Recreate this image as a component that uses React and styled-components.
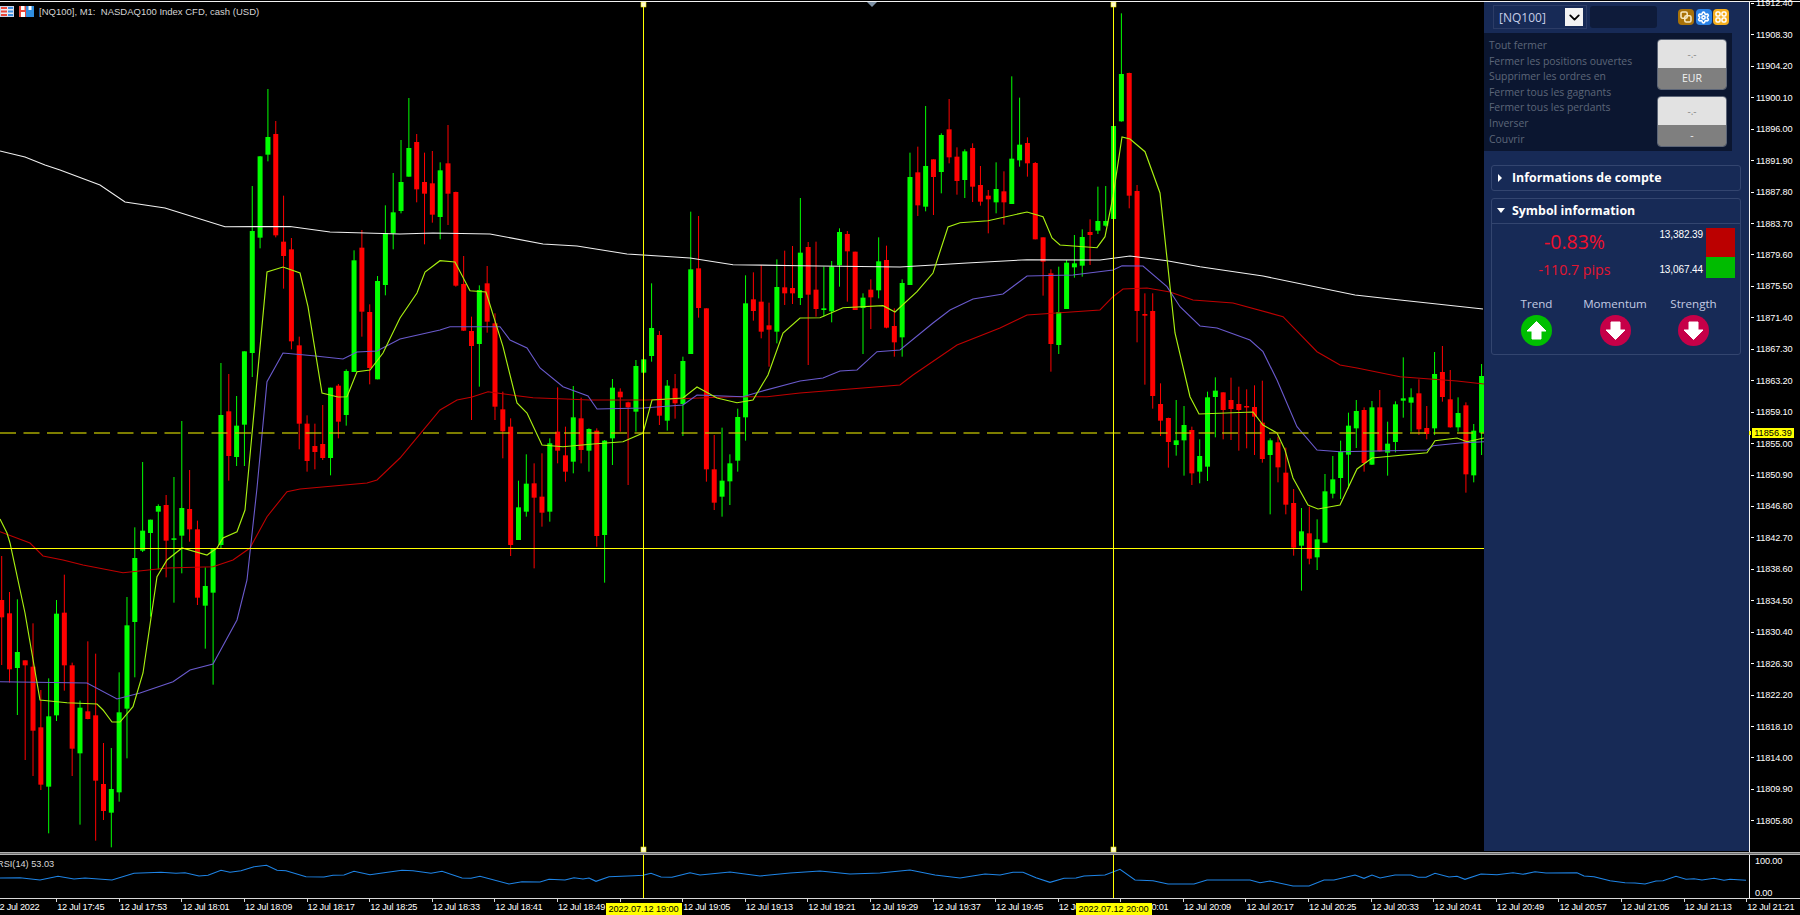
import React from "react";
import styled, { createGlobalStyle } from "styled-components";
import { ChevronDown, Settings } from "lucide-react";

const GlobalStyle = createGlobalStyle`
  html, body {
    margin: 0;
    padding: 0;
    background: #000;
    overflow: hidden;
  }
`;

// Candle rows read off the chart: wick top, body top, body bottom, wick bottom, colour.
// Each block is stored in thirds of a pixel from its base line.
const block = (base, rows) =>
  rows.map(([t, a, b, l, c]) => [base + t / 3, base + a / 3, base + b / 3, base + l / 3, c]);

const CANDLES = [
  ...block(480, [
    [228, 360, 412, 555, "r"], [336, 400, 568, 608, "r"], [358, 516, 564, 705, "g"],
    [541, 541, 556, 840, "r"], [430, 560, 752, 888, "r"], [630, 742, 914, 930, "r"],
    [595, 709, 920, 1060, "g"], [360, 401, 706, 723, "g"], [284, 398, 556, 632, "r"],
    [548, 556, 806, 888, "r"], [662, 683, 820, 1034, "g"], [484, 694, 717, 718, "r"],
    [521, 706, 902, 1082, "r"], [789, 912, 993, 1020, "r"], [804, 927, 998, 1102, "g"],
    [577, 697, 937, 965, "g"], [351, 436, 686, 835, "g"], [142, 234, 426, 592, "g"],
  ]),
  ...block(0, [
    [1386, 1592, 1652, 1656, "g"], [1559, 1559, 1599, 1850, "g"], [1513, 1518, 1535, 1708, "g"],
    [1485, 1515, 1622, 1732, "r"], [1431, 1615, 1617, 1808, "g"], [1263, 1524, 1607, 1720, "g"],
    [1410, 1527, 1588, 1625, "r"], [1562, 1588, 1793, 1815, "r"], [1702, 1758, 1817, 1946, "g"],
    [1645, 1647, 1778, 2054, "g"], [1089, 1245, 1635, 1647, "g"],
  ]),
  ...block(240, [
    [402, 514, 648, 722, "r"], [468, 557, 651, 678, "g"], [334, 334, 554, 678, "g"],
  ]),
  ...block(0, [
    [558, 693, 1059, 1131, "g"], [468, 469, 713, 745, "g"], [267, 411, 464, 484, "g"],
    [363, 402, 706, 712, "r"], [587, 725, 768, 866, "r"], [714, 748, 1024, 1048, "r"],
  ]),
  ...block(240, [
    [290, 316, 551, 628, "r"], [526, 551, 663, 695, "r"], [551, 618, 636, 688, "r"],
    [495, 612, 654, 660, "r"], [443, 443, 654, 706, "g"], [432, 437, 545, 595, "r"],
    [388, 393, 525, 557, "g"], [31, 61, 396, 396, "g"],
  ]),
  ...block(0, [[690, 743, 935, 1010, "r"]]),
  ...block(240, [[193, 216, 384, 433, "r"], [108, 123, 418, 418, "g"]]),
  ...block(0, [
    [616, 699, 855, 886, "g"], [519, 637, 700, 748, "g"], [420, 546, 633, 640, "g"],
  ]),
  ...block(130, [
    [-96, 54, 140, 140, "g"], [12, 36, 178, 217, "r"], [68, 156, 191, 343, "r"],
    [63, 160, 254, 278, "r"], [97, 121, 261, 328, "g"], [-15, 100, 191, 285, "r"],
    [185, 186, 467, 470, "r"], [378, 462, 602, 603, "r"], [560, 603, 648, 870, "r"],
    [466, 480, 642, 770, "g"], [408, 460, 575, 608, "r"], [550, 580, 830, 870, "r"],
    [785, 838, 904, 985, "r"], [865, 890, 1245, 1278, "r"], [1052, 1132, 1230, 1230, "g"],
    [973, 1061, 1145, 1160, "g"], [1000, 1060, 1103, 1315, "r"], [970, 1100, 1148, 1190, "r"],
    [925, 940, 1145, 1175, "g"], [772, 905, 962, 1000, "r"], [890, 976, 1025, 1055, "r"],
    [768, 862, 995, 1030, "g"], [803, 865, 960, 1000, "r"], [895, 897, 962, 1025, "g"],
    [895, 902, 1218, 1250, "r"], [930, 932, 1215, 1358, "g"], [747, 773, 925, 1005, "g"],
    [775, 785, 802, 905, "r"], [815, 817, 832, 1065, "r"], [690, 708, 845, 905, "g"],
    [688, 688, 728, 730, "g"], [460, 594, 678, 695, "g"], [603, 615, 857, 885, "r"],
    [750, 767, 872, 902, "g"], [732, 775, 820, 866, "r"], [680, 693, 822, 918, "g"],
    [245, 418, 672, 672, "g"], [258, 415, 534, 563, "r"], [535, 535, 1018, 1055, "r"],
    [915, 1018, 1118, 1140, "r"], [893, 1052, 1100, 1160, "g"], [973, 1000, 1054, 1125, "g"],
    [836, 861, 992, 1025, "g"], [436, 520, 862, 932, "g"], [427, 508, 543, 572, "r"],
    [405, 515, 605, 625, "r"], [518, 586, 599, 710, "r"], [388, 471, 605, 640, "g"],
    [362, 472, 490, 525, "r"], [348, 474, 490, 522, "r"],
  ]),
  ...block(0, [
    [594, 758, 894, 915, "g"], [726, 741, 884, 1095, "r"], [725, 869, 927, 950, "r"],
    [800, 925, 930, 950, "g"], [783, 800, 934, 967, "g"], [685, 696, 796, 860, "g"],
    [693, 702, 754, 905, "r"], [755, 755, 930, 930, "r"], [880, 893, 924, 1062, "g"],
    [838, 869, 892, 987, "r"], [712, 784, 871, 895, "g"], [737, 780, 983, 985, "r"],
    [925, 978, 1027, 1070, "r"], [838, 849, 1012, 1070, "g"], [458, 531, 855, 855, "g"],
    [440, 517, 616, 648, "r"], [318, 498, 620, 634, "g"], [478, 478, 531, 645, "r"],
    [400, 405, 516, 580, "g"], [297, 388, 472, 490, "r"], [442, 470, 543, 584, "r"],
    [448, 454, 540, 594, "g"], [430, 444, 560, 606, "r"], [498, 555, 605, 617, "r"],
    [570, 587, 598, 700, "r"], [487, 567, 607, 640, "g"], [514, 574, 607, 674, "r"],
    [229, 476, 612, 612, "g"], [293, 434, 481, 500, "g"], [412, 429, 490, 530, "r"],
    [486, 489, 718, 718, "r"], [712, 712, 785, 887, "r"], [808, 820, 1032, 1115, "r"],
    [800, 936, 1035, 1062, "g"], [780, 788, 927, 927, "g"], [705, 790, 802, 833, "g"],
    [688, 711, 797, 830, "g"], [658, 696, 705, 795, "r"], [560, 663, 692, 702, "g"],
    [558, 663, 677, 680, "g"], [378, 378, 657, 660, "g"], [40, 222, 364, 365, "g"],
    [218, 219, 587, 625, "r"], [555, 573, 933, 1027, "r"], [880, 942, 947, 1154, "r"],
    [880, 933, 1188, 1226, "r"],
  ]),
  ...block(300, [
    [250, 312, 362, 408, "r"], [353, 354, 426, 503, "r"], [300, 421, 435, 467, "g"],
    [318, 375, 421, 527, "g"], [380, 390, 520, 555, "r"], [418, 468, 515, 550, "g"],
    [275, 292, 500, 543, "g"], [232, 272, 291, 412, "g"], [277, 277, 330, 418, "r"],
    [233, 300, 327, 420, "r"], [260, 312, 330, 452, "r"], [268, 318, 321, 445, "r"],
    [256, 321, 350, 465, "r"], [242, 368, 477, 488, "r"], [415, 421, 465, 643, "g"],
    [410, 427, 502, 547, "r"], [443, 518, 614, 643, "r"], [567, 609, 743, 767, "r"],
    [624, 694, 737, 872, "g"], [620, 700, 776, 793, "r"], [658, 718, 772, 810, "g"],
    [522, 574, 728, 728, "g"], [468, 538, 581, 595, "g"], [422, 456, 534, 597, "g"],
    [338, 377, 464, 565, "g"], [300, 333, 385, 444, "g"], [322, 330, 489, 515, "r"],
    [303, 322, 494, 495, "g"], [270, 322, 454, 455, "r"], [365, 431, 458, 527, "g"],
    [304, 313, 426, 457, "g"], [172, 295, 302, 353, "g"], [265, 292, 308, 395, "g"],
    [238, 280, 388, 405, "r"], [318, 384, 402, 418, "r"], [156, 222, 385, 405, "g"],
    [138, 216, 291, 305, "r"], [210, 298, 382, 383, "r"], [292, 339, 382, 395, "g"],
    [307, 316, 523, 578, "r"], [372, 392, 526, 547, "g"], [192, 228, 398, 465, "g"],
  ]),
];

const MA_SLOW = "0,151 25,157 45,165 60,170 100,185 125,202 165,208 225,226.7 290,226.5 330,232 400,234 433,233 490,234 543,244 577,246 627,254 690,258 733,264.7 800,265.7 900,267 967,263 1027,259.7 1100,260 1130,256 1167,260.7 1200,266.7 1263,276 1355,295 1400,300 1483,309";
const MA_RED = "0,531.7 30,543 43,556 63,560 83,565 123,572.7 167,568 213,566.7 233,560 250,548 267,516.7 287,491.7 300,489 367,483 377,480 400,458 440,410 457,400 472,397 488,391.7 517,395.7 533,397.7 590,400 647,400 733,396.7 767,396.7 800,393 900,385 913,375 957,345 1000,328 1027,315 1100,310 1113,296.7 1123,289 1147,288 1170,292 1193,300 1233,303 1283,316.7 1317,351.7 1340,365 1357,368 1400,376.7 1457,381 1484,384";
const MA_BLUE = "0,681.7 87,683 117,699 140,693 173,681.7 190,670 213,664 237,620 247,580 257,488 267,381.7 283,353 313,355.7 343,359 357,352 377,351 400,339 440,330 450,326.7 500,326.7 510,340 527,348 540,368 563,386.7 588,396 597,409 643,408 683,405 697,395 743,396.7 760,391.7 800,381 823,378 840,371 857,370 877,351.7 900,350 933,323 950,310 973,299 1003,294 1027,276 1073,275 1113,270 1122,265.7 1143,266 1167,286.7 1180,306.7 1200,326 1217,328 1250,340 1263,351.7 1277,380 1297,426.7 1317,450 1340,451.7 1427,450 1433,445.7 1460,443 1484,441.7";
const MA_FAST = "0,519 7,533 10,543 25,613 40,700 67,702.7 97,704 103,710 112,722 120,722 133,706.7 143,673 157,576.7 167,560 182,548 207,555 217,548 223,538 237,531.7 245,510 247,488 267,272 283,267 300,273 308,306.7 322,393 338,397 347,396.7 357,371.7 370,370 383,353 400,318 417,293 425,272 440,260.7 455,262 470,290.7 486,292 503,346.7 517,403 527,413 542,445 563,446.7 593,444 623,441.7 643,433 652,400 683,398 697,387 717,398 737,402.7 753,400 768,375 783,333 800,318 820,317.7 843,307.7 883,305.7 895,312 917,291.7 933,273 948,227 960,222.7 988,220.7 1027,212 1043,216.7 1052,238 1060,245 1097,247.7 1105,236.7 1113,196.7 1122,137 1130,139 1145,151.7 1160,193 1175,333 1190,396.7 1199,414 1253,412 1263,425 1277,433 1285,450 1293,478 1308,505 1318,509 1340,505 1357,469 1372,458 1427,452.7 1435,440.7 1457,438 1467,441.7 1484,438";
const RSI_LINE = "0,878 20,877.7 40,880 58,876.3 74,879 85,878 112,880 134,873.3 161,872.3 176,873.3 185,872.7 199,876 208,875.3 221,870.3 230,872.3 241,870.7 254,866.7 266.5,865.3 277,870.3 286,870.7 306,876.7 324,877 333,875.3 344,875 354,871.3 370,874.7 384,872.7 402,870.3 413,870.7 431,873.3 442,871.3 462,878 471,878.3 480,876.3 509,884 522,881.7 540,882 549,879.3 565,880 574,877.7 583,879 589,878 596,881.3 609,876.7 634,875.7 643,875.3 651,873.3 661,877 672,877.3 690,872.7 700,875 730,872 760,876 790,873 820,871 850,874 880,873 910,870 935,875 960,878 985,874 1000,875 1013,872.3 1023,872.3 1036,877.7 1050,882.3 1064,878.3 1076,878 1084,876 1105,875 1120,869.3 1135,880 1153,880.7 1168,884 1194,884 1207,880 1250,880 1260,882.7 1270,881 1293,886 1309,886 1324,880 1334,880 1355,875 1364,878.3 1372,875 1380,878 1395,875 1411,875 1418,877.3 1426,877.3 1435,873.3 1449,877 1457,876.3 1465,879.3 1481,874 1497,874.7 1513,872.7 1523,874.3 1535,871.7 1546,873 1577,872.7 1584,876 1594,876.7 1610,880.7 1625,882.7 1635,883 1645,884 1656,881 1663,880.7 1676,876.3 1686,879.3 1694,878.7 1702,880 1714,878.3 1724,880.3 1730,879.3 1746,880.3";

const PRICES = [
  "11912.40", "11908.30", "11904.20", "11900.10", "11896.00", "11891.90", "11887.80",
  "11883.70", "11879.60", "11875.50", "11871.40", "11867.30", "11863.20", "11859.10",
  "11855.00", "11850.90", "11846.80", "11842.70", "11838.60", "11834.50", "11830.40",
  "11826.30", "11822.20", "11818.10", "11814.00", "11809.90", "11805.80",
];

const CURSOR_X = [643.5, 1113.5];

// Tick labels every 8 minutes, the first one carries the year
const TICK_LABELS = ["12 Jul 2022"];
for (let m = 17 * 60 + 45; m <= 21 * 60 + 21; m += 8) {
  TICK_LABELS.push(`12 Jul ${Math.floor(m / 60)}:${String(m % 60).padStart(2, "0")}`);
}

const CLOSE_LABELS = [
  "Tout fermer",
  "Fermer les positions ouvertes",
  "Supprimer les ordres en",
  "Fermer tous les gagnants",
  "Fermer tous les perdants",
  "Inverser",
  "Couvrir",
];

const AXIS_FONT = `"Liberation Sans", Arial, sans-serif`;
const PANEL_FONT = `"Open Sans", "Noto Sans", sans-serif`;

const Page = styled.div`
  width: 1800px;
  height: 915px;
  background: #000;
  display: flex;
  flex-direction: column;
  overflow: hidden;
`;

const TopRule = styled.div`
  height: 1px;
  margin-top: 1px;
  background: #f2f2f2;
`;

const MainRow = styled.div`
  height: 850px;
  display: flex;
`;

const ChartPane = styled.div`
  position: relative;
  width: 1484px;
  flex: none;
`;

const ChartSvg = styled.svg`
  display: block;
`;

const ChartTitle = styled.div`
  position: absolute;
  top: 4px;
  left: 0;
  display: flex;
  align-items: center;
  gap: 5px;
  color: #d4d4d4;
  font: 9.5px/12px ${AXIS_FONT};
  white-space: pre;
`;

const ScrollMark = styled.div`
  position: absolute;
  top: 0;
  left: 867px;
  width: 0;
  height: 0;
  border-left: 5px solid transparent;
  border-right: 5px solid transparent;
  border-top: 5px solid #7d90a4;
`;

const Panel = styled.div`
  width: 265px;
  height: 849px;
  flex: none;
  background: #172a56;
  font-family: ${PANEL_FONT};
`;

const SymbolBar = styled.div`
  display: flex;
  align-items: center;
  height: 31px;
  padding-left: 9px;
`;

const SymbolSelect = styled.div`
  width: 94px;
  height: 24px;
  box-sizing: border-box;
  border: 1px solid #2c3c66;
  display: flex;
  align-items: center;
  justify-content: space-between;
  padding: 0 3px 0 5px;
  color: #c6cde6;
  font-size: 12px;
`;

const SelectButton = styled.div`
  width: 18px;
  height: 18px;
  background: #f4f4f4;
  display: flex;
  align-items: center;
  justify-content: center;
  color: #000;
`;

const SymbolInput = styled.div`
  width: 67px;
  height: 22px;
  margin-left: 3px;
  background: #0e1b3a;
  border-radius: 3px;
`;

const ToolIcons = styled.div`
  display: flex;
  gap: 1.5px;
  margin-left: 21px;
`;

const ToolIcon = styled.div`
  width: 16px;
  height: 16px;
  border-radius: 4px;
  background: ${(p) => p.$bg};
  display: flex;
  align-items: center;
  justify-content: center;
  color: #fff;
`;

const TradeBox = styled.div`
  width: 248px;
  height: 118px;
  box-sizing: border-box;
  background: #0b1630;
  display: flex;
  justify-content: space-between;
  padding: 5px 5px 0 5px;
`;

const CloseList = styled.div`
  display: flex;
  flex-direction: column;
`;

const CloseItem = styled.div`
  height: 15.6px;
  line-height: 15px;
  font-size: 10.4px;
  color: #5d6679;
  white-space: nowrap;
`;

const StatGroup = styled.div`
  display: flex;
  flex-direction: column;
  gap: 6px;
  width: 70px;
  margin-top: 1px;
`;

const StatCard = styled.div`
  height: 51px;
  border-radius: 4px;
  overflow: hidden;
  border: 1px solid #5c6577;
  box-sizing: border-box;
  display: flex;
  flex-direction: column;
  text-align: center;
  font-size: 10.5px;
`;

const StatValue = styled.div`
  flex: 1;
  background: #e2e2e2;
  color: #8c8c8c;
  line-height: 28px;
  font-size: 10px;
`;

const StatUnit = styled.div`
  height: 21px;
  background: #7f7f7f;
  color: #f0f0f0;
  line-height: 20px;
`;

const Card = styled.div`
  margin: ${(p) => p.$top}px 8px 0 7px;
  border: 1px solid #33456f;
  border-radius: 3px;
`;

const CardHeader = styled.div`
  height: 24px;
  display: flex;
  align-items: center;
  gap: 8px;
  padding-left: 5px;
  color: #fff;
  font-size: 12.4px;
  font-weight: 700;
`;

const Caret = styled.div`
  width: 0;
  height: 0;
  ${(p) =>
    p.$open
      ? `margin-right: -1px;
         border-left: 4px solid transparent;
         border-right: 4px solid transparent;
         border-top: 5px solid #fff;`
      : `margin: 0 2px 0 1px;
         border-top: 4px solid transparent;
         border-bottom: 4px solid transparent;
         border-left: 4px solid #fff;`}
`;

const SymbolBody = styled.div`
  border-top: 1px solid #33456f;
  height: 131px;
  box-sizing: border-box;
`;

const PriceBlock = styled.div`
  display: flex;
  height: 67px;
`;

const ChangeBlock = styled.div`
  width: 159px;
  padding: 5px 0 0 6px;
  box-sizing: border-box;
  display: flex;
  flex-direction: column;
  align-items: center;
  color: #f0102c;
`;

const ChangePct = styled.div`
  font-size: 19.5px;
  line-height: 26px;
`;

const ChangePips = styled.div`
  font-size: 14.2px;
  line-height: 22px;
  margin-top: 4px;
  color: #e41530;
`;

const RangeLabels = styled.div`
  width: 52px;
  display: flex;
  flex-direction: column;
  justify-content: space-between;
  text-align: right;
  padding: 5px 2px 1px 0;
  height: 47px;
  color: #fff;
  font-size: 10px;
  line-height: 12px;
  font-family: ${AXIS_FONT};
  letter-spacing: -0.1px;
`;

const RangeBar = styled.div`
  width: 29px;
  margin: 4px 0 0 1px;
  height: 50px;
  display: flex;
  flex-direction: column;
`;

const RangeHigh = styled.div`
  height: 29px;
  background: #bb0000;
`;

const RangeLow = styled.div`
  flex: 1;
  background: #00bb00;
`;

const Signals = styled.div`
  display: grid;
  grid-template-columns: 79px 78px 79px;
  padding: 5px 0 0 5px;
`;

const Signal = styled.div`
  display: flex;
  flex-direction: column;
  align-items: center;
  color: #c3cbe3;
  font-size: 11.6px;
  line-height: 16px;
  gap: 3px;
  white-space: nowrap;
`;

const Badge = styled.div`
  width: 31px;
  height: 31px;
  border-radius: 50%;
  background: ${(p) => (p.$up ? "#00bf00" : "#c60048")};
  display: flex;
  align-items: center;
  justify-content: center;
  svg {
    transform: ${(p) => (p.$up ? "none" : "rotate(180deg)")};
  }
`;

const PriceAxis = styled.div`
  position: relative;
  flex: 1;
  border-left: 1px solid #f2f2f2;
`;

const PriceList = styled.div`
  margin-top: -14.2px;
  display: flex;
  flex-direction: column;
`;

const PriceRow = styled.div`
  height: 31.45px;
  flex: none;
  display: flex;
  align-items: center;
  color: #fff;
  font: 9.2px/8px ${AXIS_FONT};
  letter-spacing: -0.15px;
  &::before {
    content: "";
    width: 3px;
    height: 1px;
    background: #fff;
    margin: 0 2px 0 1px;
  }
`;

const LastPrice = styled.div`
  position: absolute;
  top: 426px;
  left: 2px;
  width: 42px;
  height: 10px;
  background: #ffff00;
  color: #000;
  font: 9.2px/10px ${AXIS_FONT};
  text-align: center;
  &::before {
    content: "";
    position: absolute;
    top: 3px;
    left: -3px;
    width: 2px;
    height: 4px;
    background: #ffff00;
  }
`;

const Divider = styled.div`
  height: 3px;
  box-sizing: border-box;
  background: #6e6e6e;
  border-top: 1px solid #b0b0b0;
  border-bottom: 1px solid #b0b0b0;
`;

const RsiRow = styled.div`
  position: relative;
  height: 43px;
  display: flex;
`;

const RsiLabel = styled.div`
  position: absolute;
  top: 3px;
  left: -3px;
  color: #d8d8d8;
  font: 9.2px/12px ${AXIS_FONT};
`;

const RsiAxis = styled.div`
  flex: 1;
  border-left: 1px solid #f2f2f2;
  display: flex;
  flex-direction: column;
  justify-content: space-between;
  padding: 0 0 0 5px;
  color: #fff;
  font: 9.2px/12px ${AXIS_FONT};
  letter-spacing: -0.15px;
  span:last-child {
    margin-bottom: -1px;
  }
`;

const TimeAxis = styled.div`
  position: relative;
  height: 17px;
  border-top: 1px solid #d8d8d8;
  overflow: hidden;
`;

const TickRow = styled.div`
  display: flex;
  margin-left: -6.4px;
`;

const Tick = styled.div`
  flex: 0 0 62.6px;
  height: 16px;
  box-sizing: border-box;
  padding-top: 2px;
  border-left: 1px solid #d8d8d8;
  background: #000;
  color: #fff;
  font: 9.2px/12px ${AXIS_FONT};
  letter-spacing: -0.25px;
  white-space: nowrap;
  background-clip: padding-box;
  border-image: linear-gradient(#d8d8d8 4px, #000 4px) 1;
`;

const CursorTime = styled.div`
  position: absolute;
  top: 4px;
  left: ${(p) => p.$x}px;
  width: 76px;
  height: 12px;
  background: #ffff00;
  color: #000;
  font: 9.2px/12px ${AXIS_FONT};
  letter-spacing: -0.1px;
  text-align: center;
`;

const FlagIcon = () => (
  <svg width="14" height="11" viewBox="0 0 14 11">
    <rect width="14" height="11" fill="#e9e9f2" />
    <path d="M0 1h7v2H0zM0 4.5h7v2H0zM0 8h7v2H0z" fill="#e8473a" />
    <path d="M8 1h5v2H8zM8 4.5h5v2H8zM8 8h5v2H8z" fill="#3b8fe0" />
    <rect x="0.5" y="0.5" width="13" height="10" fill="none" stroke="#c9d4ea" />
  </svg>
);

const DiskIcon = () => (
  <svg width="15" height="11" viewBox="0 0 15 11">
    <rect width="7" height="11" fill="#e8473a" />
    <rect x="7" width="8" height="11" fill="#2f8ee0" />
    <rect x="2" y="0" width="3.5" height="4" fill="#fff" />
    <rect x="2" y="6" width="4" height="5" fill="#fff" />
    <rect x="9.5" y="0" width="3" height="4" fill="#fff" />
  </svg>
);

const LinkGlyph = () => (
  <svg width="12" height="12" viewBox="0 0 12 12" fill="none" stroke="#f6e7c0" strokeWidth="1.6">
    <rect x="1" y="1" width="6.2" height="6.2" rx="1.4" />
    <rect x="4.8" y="4.8" width="6.2" height="6.2" rx="1.4" />
  </svg>
);

const CrossGlyph = () => (
  <svg width="12" height="12" viewBox="0 0 12 12" fill="none" stroke="#fff" strokeWidth="1.5">
    <rect x="1" y="1" width="4" height="4" rx="1.2" />
    <rect x="7" y="1" width="4" height="4" rx="1.2" />
    <rect x="1" y="7" width="4" height="4" rx="1.2" />
    <rect x="7" y="7" width="4" height="4" rx="1.2" />
  </svg>
);

const BlockArrow = () => (
  <svg width="23" height="23" viewBox="0 0 23 23">
    <path
      d="M11.5 2.5 21 12h-5v8H7v-8H2z"
      fill="#fff"
      stroke="#fff"
      strokeWidth="1"
      strokeLinejoin="round"
    />
  </svg>
);

const CursorLines = ({ from, to }) =>
  CURSOR_X.map((x) => <line key={x} x1={x} x2={x} y1={from} y2={to} stroke="#ffff00" />);

const CursorGrip = ({ y }) =>
  CURSOR_X.map((x) => (
    <rect key={x} x={x - 2.5} y={y} width="5" height="5" fill="#fffbd0" stroke="#e8e800" strokeWidth="0.6" />
  ));

const Candles = () =>
  CANDLES.map(([wickTop, top, bottom, wickBottom, dir], i) => {
    const x = 1.7 + 7.83 * i;
    const color = dir === "g" ? "#00ff00" : "#ff0000";
    return (
      <g key={i}>
        <line x1={x} x2={x} y1={wickTop} y2={wickBottom} stroke={color} />
        <rect x={x - 2.5} y={top} width="5" height={Math.max(bottom - top, 1.5)} fill={color} />
      </g>
    );
  });

const MainChart = () => (
  <ChartSvg width="1484" height="850" viewBox="0 2 1484 850">
    <Candles />
    <polyline points={MA_SLOW} fill="none" stroke="#f0f0f0" strokeWidth="1.1" />
    <polyline points={MA_RED} fill="none" stroke="#c00000" strokeWidth="1.1" />
    <polyline points={MA_BLUE} fill="none" stroke="#6a5acd" strokeWidth="1.1" />
    <polyline points={MA_FAST} fill="none" stroke="#a8f010" strokeWidth="1.15" />
    <line x1="0" x2="1484" y1="548.5" y2="548.5" stroke="#ffff00" />
    <line
      x1="0"
      x2="1484"
      y1="433"
      y2="433"
      stroke="#c4c400"
      strokeOpacity="0.85"
      strokeWidth="1.6"
      strokeDasharray="16 7.5"
    />
    <CursorLines from={2} to={852} />
    <CursorGrip y={2} />
    <CursorGrip y={847} />
  </ChartSvg>
);

const RsiChart = () => (
  <ChartSvg width="1749" height="43" viewBox="0 855 1749 43">
    <polyline points={RSI_LINE} fill="none" stroke="#1e84e6" strokeWidth="1.1" />
    <CursorLines from={855} to={898} />
  </ChartSvg>
);

const SignalItem = ({ label, up }) => (
  <Signal>
    {label}
    <Badge $up={up}>
      <BlockArrow />
    </Badge>
  </Signal>
);

const SidePanel = () => (
  <Panel>
    <SymbolBar>
      <SymbolSelect>
        [NQ100]
        <SelectButton>
          <ChevronDown size={17} strokeWidth={2.6} />
        </SelectButton>
      </SymbolSelect>
      <SymbolInput />
      <ToolIcons>
        <ToolIcon $bg="#a97208">
          <LinkGlyph />
        </ToolIcon>
        <ToolIcon $bg="#2a82e6">
          <Settings size={13} strokeWidth={3} />
        </ToolIcon>
        <ToolIcon $bg="#f5ae1c">
          <CrossGlyph />
        </ToolIcon>
      </ToolIcons>
    </SymbolBar>
    <TradeBox>
      <CloseList>
        {CLOSE_LABELS.map((label) => (
          <CloseItem key={label}>{label}</CloseItem>
        ))}
      </CloseList>
      <StatGroup>
        <StatCard>
          <StatValue>-.-</StatValue>
          <StatUnit>EUR</StatUnit>
        </StatCard>
        <StatCard>
          <StatValue>-.-</StatValue>
          <StatUnit>-</StatUnit>
        </StatCard>
      </StatGroup>
    </TradeBox>
    <Card $top={14}>
      <CardHeader>
        <Caret />
        Informations de compte
      </CardHeader>
    </Card>
    <Card $top={7}>
      <CardHeader>
        <Caret $open />
        Symbol information
      </CardHeader>
      <SymbolBody>
        <PriceBlock>
          <ChangeBlock>
            <ChangePct>-0.83%</ChangePct>
            <ChangePips>-110.7 pips</ChangePips>
          </ChangeBlock>
          <RangeLabels>
            <span>13,382.39</span>
            <span>13,067.44</span>
          </RangeLabels>
          <RangeBar>
            <RangeHigh />
            <RangeLow />
          </RangeBar>
        </PriceBlock>
        <Signals>
          <SignalItem label="Trend" up />
          <SignalItem label="Momentum" />
          <SignalItem label="Strength" />
        </Signals>
      </SymbolBody>
    </Card>
  </Panel>
);

export default function App() {
  return (
    <Page>
      <GlobalStyle />
      <TopRule />
      <MainRow>
        <ChartPane>
          <MainChart />
          <ChartTitle>
            <FlagIcon />
            <DiskIcon />
            {"[NQ100], M1:  NASDAQ100 Index CFD, cash (USD)"}
          </ChartTitle>
          <ScrollMark />
        </ChartPane>
        <SidePanel />
        <PriceAxis>
          <PriceList>
            {PRICES.map((price) => (
              <PriceRow key={price}>{price}</PriceRow>
            ))}
          </PriceList>
          <LastPrice>11856.39</LastPrice>
        </PriceAxis>
      </MainRow>
      <Divider />
      <RsiRow>
        <RsiChart />
        <RsiLabel>RSI(14) 53.03</RsiLabel>
        <RsiAxis>
          <span>100.00</span>
          <span>0.00</span>
        </RsiAxis>
      </RsiRow>
      <TimeAxis>
        <TickRow>
          {TICK_LABELS.map((label) => (
            <Tick key={label}>{label}</Tick>
          ))}
        </TickRow>
        <CursorTime $x={605.5}>2022.07.12 19:00</CursorTime>
        <CursorTime $x={1075.5}>2022.07.12 20:00</CursorTime>
      </TimeAxis>
    </Page>
  );
}
